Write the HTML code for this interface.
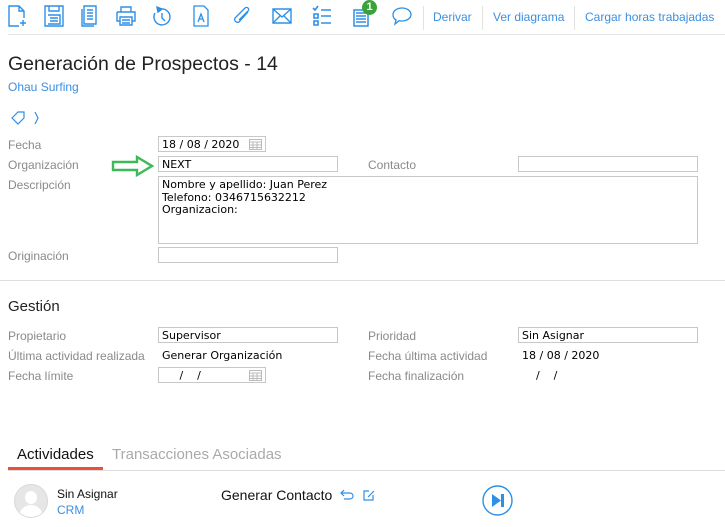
<!DOCTYPE html>
<html><head><meta charset="utf-8"><style>
body{margin:0;width:725px;height:527px;background:#fff;position:relative;overflow:hidden;font-family:"Liberation Sans",sans-serif}
.a{position:absolute;white-space:nowrap}
.lb{position:absolute;font-size:12px;color:#8a8a8a;white-space:nowrap}
.in{position:absolute;border:1px solid #c8c8c8;height:16px;box-sizing:border-box;font-family:"DejaVu Sans",sans-serif;font-size:11px;color:#000;padding:1px 3px;white-space:nowrap;line-height:13px}
.v{position:absolute;font-family:"DejaVu Sans",sans-serif;font-size:11px;color:#000;white-space:nowrap}
svg.i{position:absolute;top:5px}
.lk{position:absolute;top:10px;font-size:12px;color:#3d8fe0}
.sep{position:absolute;top:6px;width:1px;height:24px;background:#e2e2e2}
</style></head><body>
<svg class="i" style="left:8px" width="20" height="22" viewBox="0 0 20 22" fill="none" stroke="#2e8fe6" stroke-width="1.4"><path d="M11 21H1V1h10l5 5v7M11 1v5h5M15 15v6M12 18h6"/></svg>
<svg class="i" style="left:44px" width="20" height="22" viewBox="0 0 20 22" fill="none" stroke="#2e8fe6" stroke-width="1.4"><path d="M1 1h18v20H1zM5 1v5h10V1M4 10h12v9H4M6 13h8M6 16h8"/></svg>
<svg class="i" style="left:80px" width="20" height="22" viewBox="0 0 20 22" fill="none" stroke="#2e8fe6" stroke-width="1.4"><path d="M4 1h12v18H4zM2 4v17h12M7 5h6M7 8h6M7 11h6M7 14h6"/></svg>
<svg class="i" style="left:116px" width="20" height="22" viewBox="0 0 20 22" fill="none" stroke="#2e8fe6" stroke-width="1.4"><path d="M5 7V2h10v5M1 7h18v9h-3M4 16H1V7M4 12h12v8H4zM6 15h8M6 18h8"/></svg>
<svg class="i" style="left:152px" width="20" height="22" viewBox="0 0 20 22" fill="none" stroke="#2e8fe6" stroke-width="1.4"><path d="M9 4a8 8 0 1 1-6 4M10 8v5l3 3"/><path d="M5 2l5 2-4 3z" fill="#2e8fe6"/></svg>
<svg class="i" style="left:193px" width="16" height="22" viewBox="0 0 16 22" fill="none" stroke="#2e8fe6" stroke-width="1.3"><path d="M1 1h10l4 4v16H1zM5 17l3-8 3 8M6 14h4"/></svg>
<svg class="i" style="left:232px" width="20" height="22" viewBox="0 0 20 22" fill="none" stroke="#2e8fe6" stroke-width="1.3"><path d="M16 7L7 17a3 3 0 0 1-4-4L13 3a2 2 0 0 1 3 3L7 15"/></svg>
<svg class="i" style="left:272px" width="20" height="22" viewBox="0 0 20 22" fill="none" stroke="#2e8fe6" stroke-width="1.4"><path d="M1 4h18v14H1zM1 4l9 8 9-8M1 18l7-7M19 18l-7-7"/></svg>
<svg class="i" style="left:312px" width="20" height="22" viewBox="0 0 20 22" fill="none" stroke="#2e8fe6" stroke-width="1.4"><path d="M1 3l2 2 3-4M2 9h4v4H2zM2 16h4v4H2zM9 5h10M9 11h10M9 18h10" stroke-width="1.6"/></svg>
<svg class="i" style="left:352px" width="18" height="22" viewBox="0 0 18 22"><path d="M2 5h14v16H2z" fill="none" stroke="#2e8fe6" stroke-width="1.5"/><path d="M4 8h10M4 11h10M4 14h10M4 17h10" stroke="#2e8fe6" stroke-width="1.6"/></svg>
<div class="a" style="left:362px;top:0;width:15px;height:15px;border-radius:50%;background:#3aa23a;color:#fff;font-size:11px;font-weight:bold;text-align:center;line-height:15px">1</div>
<svg class="i" style="left:391px" width="22" height="22" viewBox="0 0 22 22" fill="none" stroke="#2e8fe6" stroke-width="1.3"><path d="M11 3c5 0 9 3 9 6.5S16 16 11 16c-1 0-2 0-3-.3L4 19l1-4C3 14 2 12 2 9.5 2 6 6 3 11 3z"/></svg>
<div class="sep" style="left:423px"></div>
<div class="lk" style="left:433px">Derivar</div>
<div class="sep" style="left:482px"></div>
<div class="lk" style="left:493px">Ver diagrama</div>
<div class="sep" style="left:574px"></div>
<div class="lk" style="left:585px">Cargar horas trabajadas</div>
<div class="a" style="left:8px;top:34px;width:717px;height:1px;background:#e6e6e6"></div>
<div class="a" style="left:8px;top:53px;font-size:19.5px;color:#222">Generación de Prospectos - 14</div>
<div class="a" style="left:8px;top:80px;font-size:12px;color:#3d8fe0">Ohau Surfing</div>
<svg class="a" style="left:10px;top:110px" width="30" height="16" viewBox="0 0 30 16" fill="none" stroke="#2e8fe6" stroke-width="1.2"><path d="M8 2h6v6l-6 6-6-6z"/><path d="M25 2l3 6-3 6"/></svg>
<div class="lb" style="left:8px;top:138px">Fecha</div>
<div class="in" style="left:158px;top:136px;width:108px">18 / 08 / 2020</div>
<svg class="a" style="left:249px;top:138px" width="13" height="12" viewBox="0 0 13 12" fill="none" stroke="#bbb"><path d="M.5 1.5h12v10H.5zM.5 4h12M4 4v8M8 4v8M.5 7h12M.5 9.5h12"/></svg>
<div class="lb" style="left:8px;top:158px">Organización</div>
<svg class="a" style="left:111px;top:155px" width="44" height="22" viewBox="0 0 44 22" fill="none" stroke="#3cba5a" stroke-width="2.4"><path d="M2 7h24V2l15 9-15 9v-5H2z"/></svg>
<div class="in" style="left:158px;top:156px;width:180px">NEXT</div>
<div class="lb" style="left:368px;top:158px">Contacto</div>
<div class="in" style="left:518px;top:156px;width:180px"></div>
<div class="lb" style="left:8px;top:178px">Descripción</div>
<div class="in" style="left:158px;top:176px;width:540px;height:68px;white-space:pre;line-height:12.5px;padding-top:2px">Nombre y apellido: Juan Perez
Telefono: 0346715632212
Organizacion:</div>
<div class="lb" style="left:8px;top:249px">Originación</div>
<div class="in" style="left:158px;top:247px;width:180px"></div>
<div class="a" style="left:0;top:280px;width:725px;height:1px;background:#ddd"></div>
<div class="a" style="left:8px;top:298px;font-size:15px;color:#222">Gestión</div>
<div class="lb" style="left:8px;top:329px">Propietario</div>
<div class="in" style="left:158px;top:327px;width:180px">Supervisor</div>
<div class="lb" style="left:368px;top:329px">Prioridad</div>
<div class="in" style="left:518px;top:327px;width:180px">Sin Asignar</div>
<div class="lb" style="left:8px;top:349px">Última actividad realizada</div>
<div class="v" style="left:162px;top:349px">Generar Organización</div>
<div class="lb" style="left:368px;top:349px">Fecha última actividad</div>
<div class="v" style="left:522px;top:349px">18 / 08 / 2020</div>
<div class="lb" style="left:8px;top:369px">Fecha límite</div>
<div class="in" style="left:158px;top:367px;width:108px">&nbsp;&nbsp;&nbsp;&nbsp;&nbsp;/&nbsp;&nbsp;&nbsp;&nbsp;/</div>
<svg class="a" style="left:249px;top:369px" width="13" height="12" viewBox="0 0 13 12" fill="none" stroke="#bbb"><path d="M.5 1.5h12v10H.5zM.5 4h12M4 4v8M8 4v8M.5 7h12M.5 9.5h12"/></svg>
<div class="lb" style="left:368px;top:369px">Fecha finalización</div>
<div class="v" style="left:522px;top:369px">&nbsp;&nbsp;&nbsp;&nbsp;/&nbsp;&nbsp;&nbsp;&nbsp;/</div>
<div class="a" style="left:17px;top:446px;font-size:15px;color:#111">Actividades</div>
<div class="a" style="left:112px;top:446px;font-size:15px;color:#aaa">Transacciones Asociadas</div>
<div class="a" style="left:8px;top:470px;width:717px;height:1px;background:#ddd"></div>
<div class="a" style="left:8px;top:467px;width:95px;height:3px;background:#e8513a"></div>
<div class="a" style="left:14px;top:484px;width:32px;height:32px;border-radius:50%;background:#e6e6e6;border:1px solid #d8d8d8;overflow:hidden">
<div class="a" style="left:10px;top:6px;width:12px;height:13px;border-radius:50%;background:#fff"></div>
<div class="a" style="left:4px;top:20px;width:24px;height:16px;border-radius:12px 12px 0 0;background:#fff"></div></div>
<div class="a" style="left:57px;top:487px;font-size:12px;color:#111">Sin Asignar</div>
<div class="a" style="left:57px;top:503px;font-size:12px;color:#3d8fe0">CRM</div>
<div class="a" style="left:221px;top:487px;font-size:14px;color:#111">Generar Contacto</div>
<svg class="a" style="left:339px;top:488px" width="40" height="14" viewBox="0 0 40 14" fill="none" stroke="#2e8fe6" stroke-width="1.2"><path d="M5 2L2 5l3 3M2 5h9a3 3 0 0 1 0 6H5"/><path d="M30 3h-5v9h9V7M29 9l6-6"/></svg>
<svg class="a" style="left:482px;top:485px" width="31" height="31" viewBox="0 0 31 31"><circle cx="15.5" cy="15.5" r="14.5" fill="none" stroke="#2e8fe6" stroke-width="1.4"/><path d="M10 9l9 6.5-9 6.5z" fill="#2e8fe6"/><rect x="19" y="9" width="3" height="13" fill="#2e8fe6"/></svg>
</body></html>
